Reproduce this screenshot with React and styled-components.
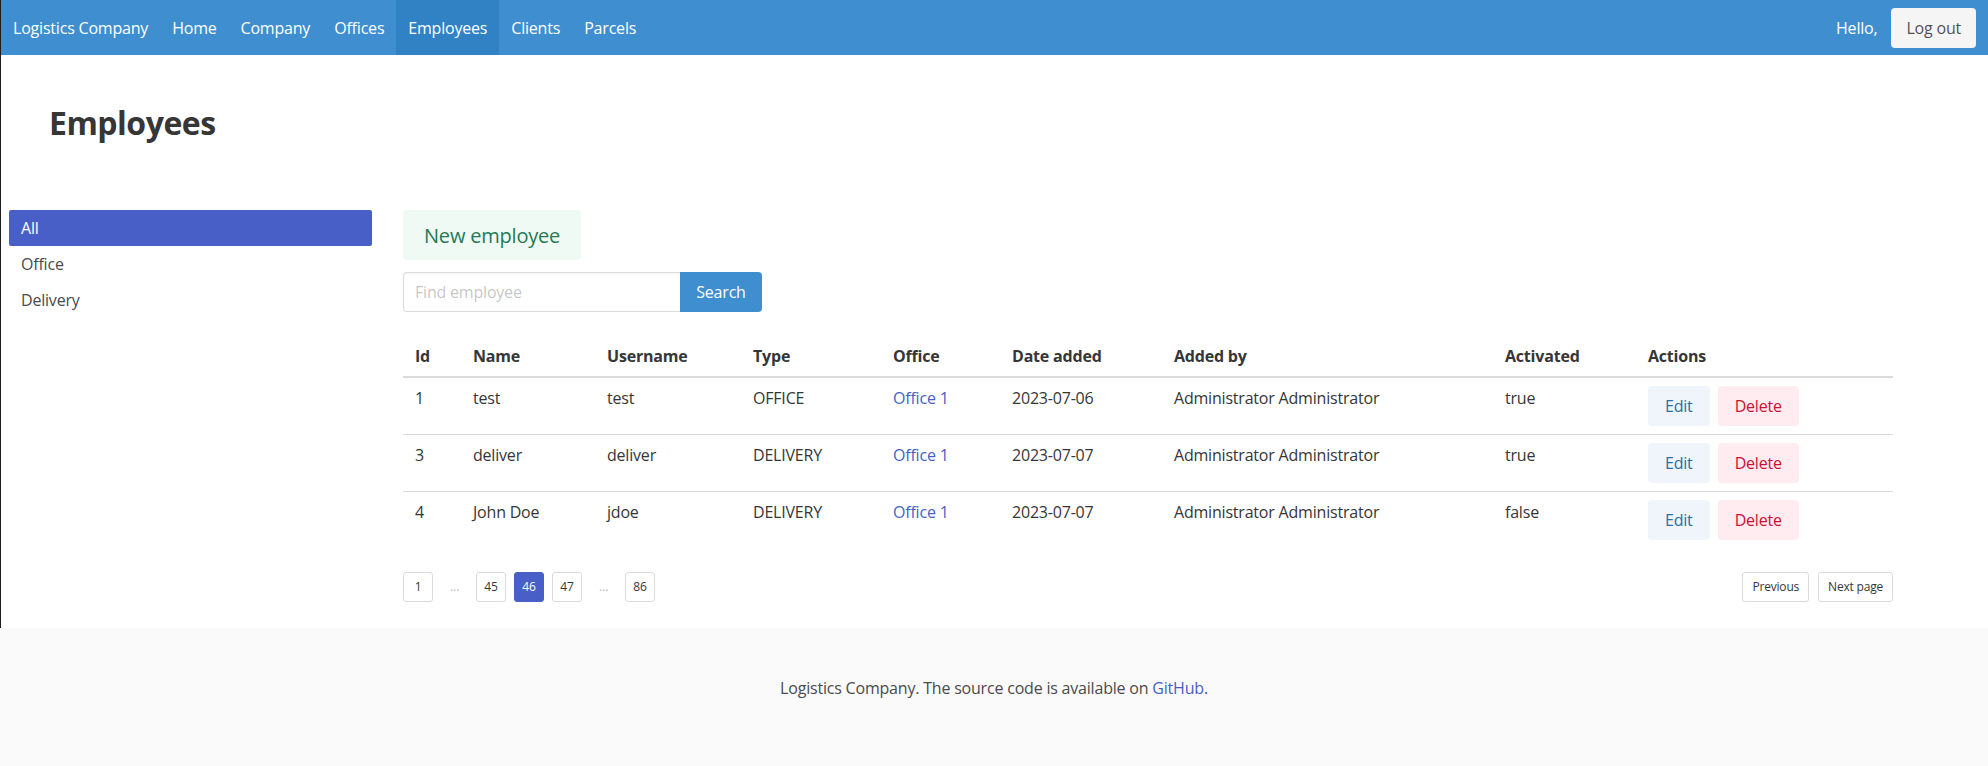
import React from "react";
import styled, { createGlobalStyle } from "styled-components";

const GlobalStyle = createGlobalStyle`
	html, body {
		margin: 0;
		padding: 0;
		background: #ffffff;
	}
	body {
		font-family: "Open Sans", Lato, sans-serif;
		font-size: 16px;
		line-height: 1.5;
		letter-spacing: -0.2px;
		color: #4a4a4a;
	}
	* {
		box-sizing: border-box;
	}
	button, input {
		letter-spacing: inherit;
	}
`;

const employees = [
	{ id: 1, name: "test", username: "test", type: "OFFICE", office: "Office 1", date: "2023-07-06", addedBy: "Administrator Administrator", activated: "true" },
	{ id: 3, name: "deliver", username: "deliver", type: "DELIVERY", office: "Office 1", date: "2023-07-07", addedBy: "Administrator Administrator", activated: "true" },
	{ id: 4, name: "John Doe", username: "jdoe", type: "DELIVERY", office: "Office 1", date: "2023-07-07", addedBy: "Administrator Administrator", activated: "false" },
];

const columns = [
	{ label: "Id", width: 58 },
	{ label: "Name", width: 134 },
	{ label: "Username", width: 146 },
	{ label: "Type", width: 140 },
	{ label: "Office", width: 119 },
	{ label: "Date added", width: 162 },
	{ label: "Added by", width: 331 },
	{ label: "Activated", width: 143 },
	{ label: "Actions", width: 257 },
];

export default function App() {
	return (
		<Page>
			<GlobalStyle />
			<Shell>
				<Navbar>
					<NavItem>Logistics Company</NavItem>
					<NavItem>Home</NavItem>
					<NavItem>Company</NavItem>
					<NavItem>Offices</NavItem>
					<NavItem $active>Employees</NavItem>
					<NavItem>Clients</NavItem>
					<NavItem>Parcels</NavItem>
					<NavEnd>
						<Greeting>Hello,</Greeting>
						<NavItem>
							<LogoutButton>Log out</LogoutButton>
						</NavItem>
					</NavEnd>
				</Navbar>

				<Header>
					<Title>Employees</Title>
				</Header>

				<Columns>
					<Sidebar>
						<MenuLink $active>All</MenuLink>
						<MenuLink>Office</MenuLink>
						<MenuLink>Delivery</MenuLink>
					</Sidebar>

					<Main>
						<NewButton>New employee</NewButton>
						<SearchRow>
							<SearchInput placeholder="Find employee" />
							<SearchButton>Search</SearchButton>
						</SearchRow>

						<Table>
							<colgroup>
								{columns.map((c) => (
									<col key={c.label} style={{ width: c.width }} />
								))}
							</colgroup>
							<thead>
								<tr>
									{columns.map((c) => (
										<Th key={c.label}>{c.label}</Th>
									))}
								</tr>
							</thead>
							<tbody>
								{employees.map((e) => (
									<Row key={e.id}>
										<Td>{e.id}</Td>
										<Td>{e.name}</Td>
										<Td>{e.username}</Td>
										<Td>{e.type}</Td>
										<Td>
											<Link>{e.office}</Link>
										</Td>
										<Td>{e.date}</Td>
										<Td>{e.addedBy}</Td>
										<Td>{e.activated}</Td>
										<Td>
											<Actions>
												<LightButton $variant="info">Edit</LightButton>
												<LightButton $variant="danger">Delete</LightButton>
											</Actions>
										</Td>
									</Row>
								))}
							</tbody>
						</Table>

						<Pagination>
							<PageList>
								<PageLink>1</PageLink>
								<Ellipsis>&hellip;</Ellipsis>
								<PageLink>45</PageLink>
								<PageLink $current>46</PageLink>
								<PageLink>47</PageLink>
								<Ellipsis>&hellip;</Ellipsis>
								<PageLink>86</PageLink>
							</PageList>
							<PageNav>
								<PageLink $wide>Previous</PageLink>
								<PageLink $wide>Next page</PageLink>
							</PageNav>
						</Pagination>
					</Main>
				</Columns>
			</Shell>

			<Footer>
				Logistics Company. The source code is available on <Link>GitHub</Link>.
			</Footer>
		</Page>
	);
}

const Page = styled.div`
	min-height: 766px;
	display: flex;
	flex-direction: column;
`;

const Shell = styled.div`
	border-left: 1px solid #1c1c1c;
	padding-bottom: 26px;
`;

const Navbar = styled.nav`
	height: 55px;
	display: flex;
	align-items: stretch;
	background-color: #3e8ed0;
	color: #ffffff;
`;

const NavItem = styled.div`
	display: flex;
	align-items: center;
	padding: 0 12px;
	color: #ffffff;
	background-color: ${(p) => (p.$active ? "#3082c5" : "transparent")};
`;

const Greeting = styled(NavItem)`
	padding-right: 2px;
`;

const NavEnd = styled.div`
	margin-left: auto;
	display: flex;
	align-items: stretch;
`;

const LogoutButton = styled.button`
	height: 40px;
	padding: 0 14px;
	border: 1px solid transparent;
	border-radius: 4px;
	background-color: #f5f5f5;
	color: rgba(0, 0, 0, 0.7);
	font-family: inherit;
	font-size: 16px;
`;

const Header = styled.div`
	padding: 50px 0 0 48px;
`;

const Title = styled.h1`
	margin: 0;
	font-size: 32px;
	line-height: 36px;
	font-weight: 700;
	letter-spacing: -0.5px;
	color: #363636;
`;

const Columns = styled.div`
	margin-top: 69px;
	padding-left: 8px;
	display: flex;
	align-items: flex-start;
	gap: 31px;
`;

const Sidebar = styled.aside`
	width: 363px;
	display: flex;
	flex-direction: column;
`;

const MenuLink = styled.a`
	display: block;
	padding: 8px 12px;
	line-height: 20px;
	border-radius: 2px;
	background-color: ${(p) => (p.$active ? "#485fc7" : "transparent")};
	color: ${(p) => (p.$active ? "#ffffff" : "#4a4a4a")};
`;

const Main = styled.main`
	width: 1490px;
	display: flex;
	flex-direction: column;
	align-items: flex-start;
`;

const NewButton = styled.button`
	height: 50px;
	padding: 0 20px;
	border: 1px solid transparent;
	border-radius: 4px;
	background-color: #effaf5;
	color: #257953;
	font-family: inherit;
	font-size: 20px;
`;

const SearchRow = styled.div`
	margin-top: 12px;
	display: flex;
`;

const SearchInput = styled.input`
	width: 277px;
	height: 40px;
	padding: 0 11px;
	border: 1px solid #dbdbdb;
	border-right: none;
	border-radius: 4px 0 0 4px;
	font-family: inherit;
	font-size: 16px;
	color: #363636;
	box-shadow: inset 0 1px 2px rgba(10, 10, 10, 0.05);
	outline: none;

	&::placeholder {
		color: rgba(54, 54, 54, 0.3);
	}
`;

const SearchButton = styled.button`
	width: 82px;
	height: 40px;
	border: 1px solid transparent;
	border-radius: 0 4px 4px 0;
	background-color: #3e8ed0;
	color: #ffffff;
	font-family: inherit;
	font-size: 16px;
`;

const Table = styled.table`
	margin-top: 24px;
	width: 1490px;
	table-layout: fixed;
	border-collapse: collapse;
	color: #363636;
`;

const Th = styled.th`
	padding: 8px 12px;
	text-align: left;
	font-weight: 700;
	line-height: 24px;
	border-bottom: 2px solid #dbdbdb;
	color: #363636;
`;

const Row = styled.tr`
	&:not(:last-child) td {
		border-bottom: 1px solid #dbdbdb;
	}
`;

const Td = styled.td`
	padding: 8px 12px;
	line-height: 24px;
	vertical-align: top;
	white-space: nowrap;
`;

const Link = styled.a`
	color: #485fc7;
	cursor: pointer;
`;

const Actions = styled.div`
	display: flex;
	gap: 8px;
`;

const variants = {
	info: { bg: "#eff5fb", fg: "#296fa8" },
	danger: { bg: "#feecf0", fg: "#cc0f35" },
};

const LightButton = styled.button`
	height: 40px;
	padding: 0 16px;
	border: 1px solid transparent;
	border-radius: 4px;
	background-color: ${(p) => variants[p.$variant].bg};
	color: ${(p) => variants[p.$variant].fg};
	font-family: inherit;
	font-size: 16px;
`;

const Pagination = styled.nav`
	margin-top: 24px;
	width: 1490px;
	display: flex;
	justify-content: space-between;
	align-items: center;
	font-size: 12px;
`;

const PageList = styled.div`
	display: flex;
	gap: 8px;
`;

const PageNav = styled.div`
	display: flex;
	gap: 9px;
`;

const PageLink = styled.a`
	height: 30px;
	min-width: 30px;
	padding: 0 ${(p) => (p.$wide ? "9px" : "6px")};
	display: flex;
	align-items: center;
	justify-content: center;
	border: 1px solid ${(p) => (p.$current ? "#485fc7" : "#dbdbdb")};
	border-radius: 3px;
	background-color: ${(p) => (p.$current ? "#485fc7" : "#ffffff")};
	color: ${(p) => (p.$current ? "#ffffff" : "#363636")};
`;

const Ellipsis = styled.span`
	width: 27px;
	height: 30px;
	display: flex;
	align-items: center;
	justify-content: center;
	color: #b5b5b5;
`;

const Footer = styled.footer`
	flex: 1;
	padding: 48px 24px 96px;
	background-color: #fafafa;
	text-align: center;
	color: #4a4a4a;
`;
